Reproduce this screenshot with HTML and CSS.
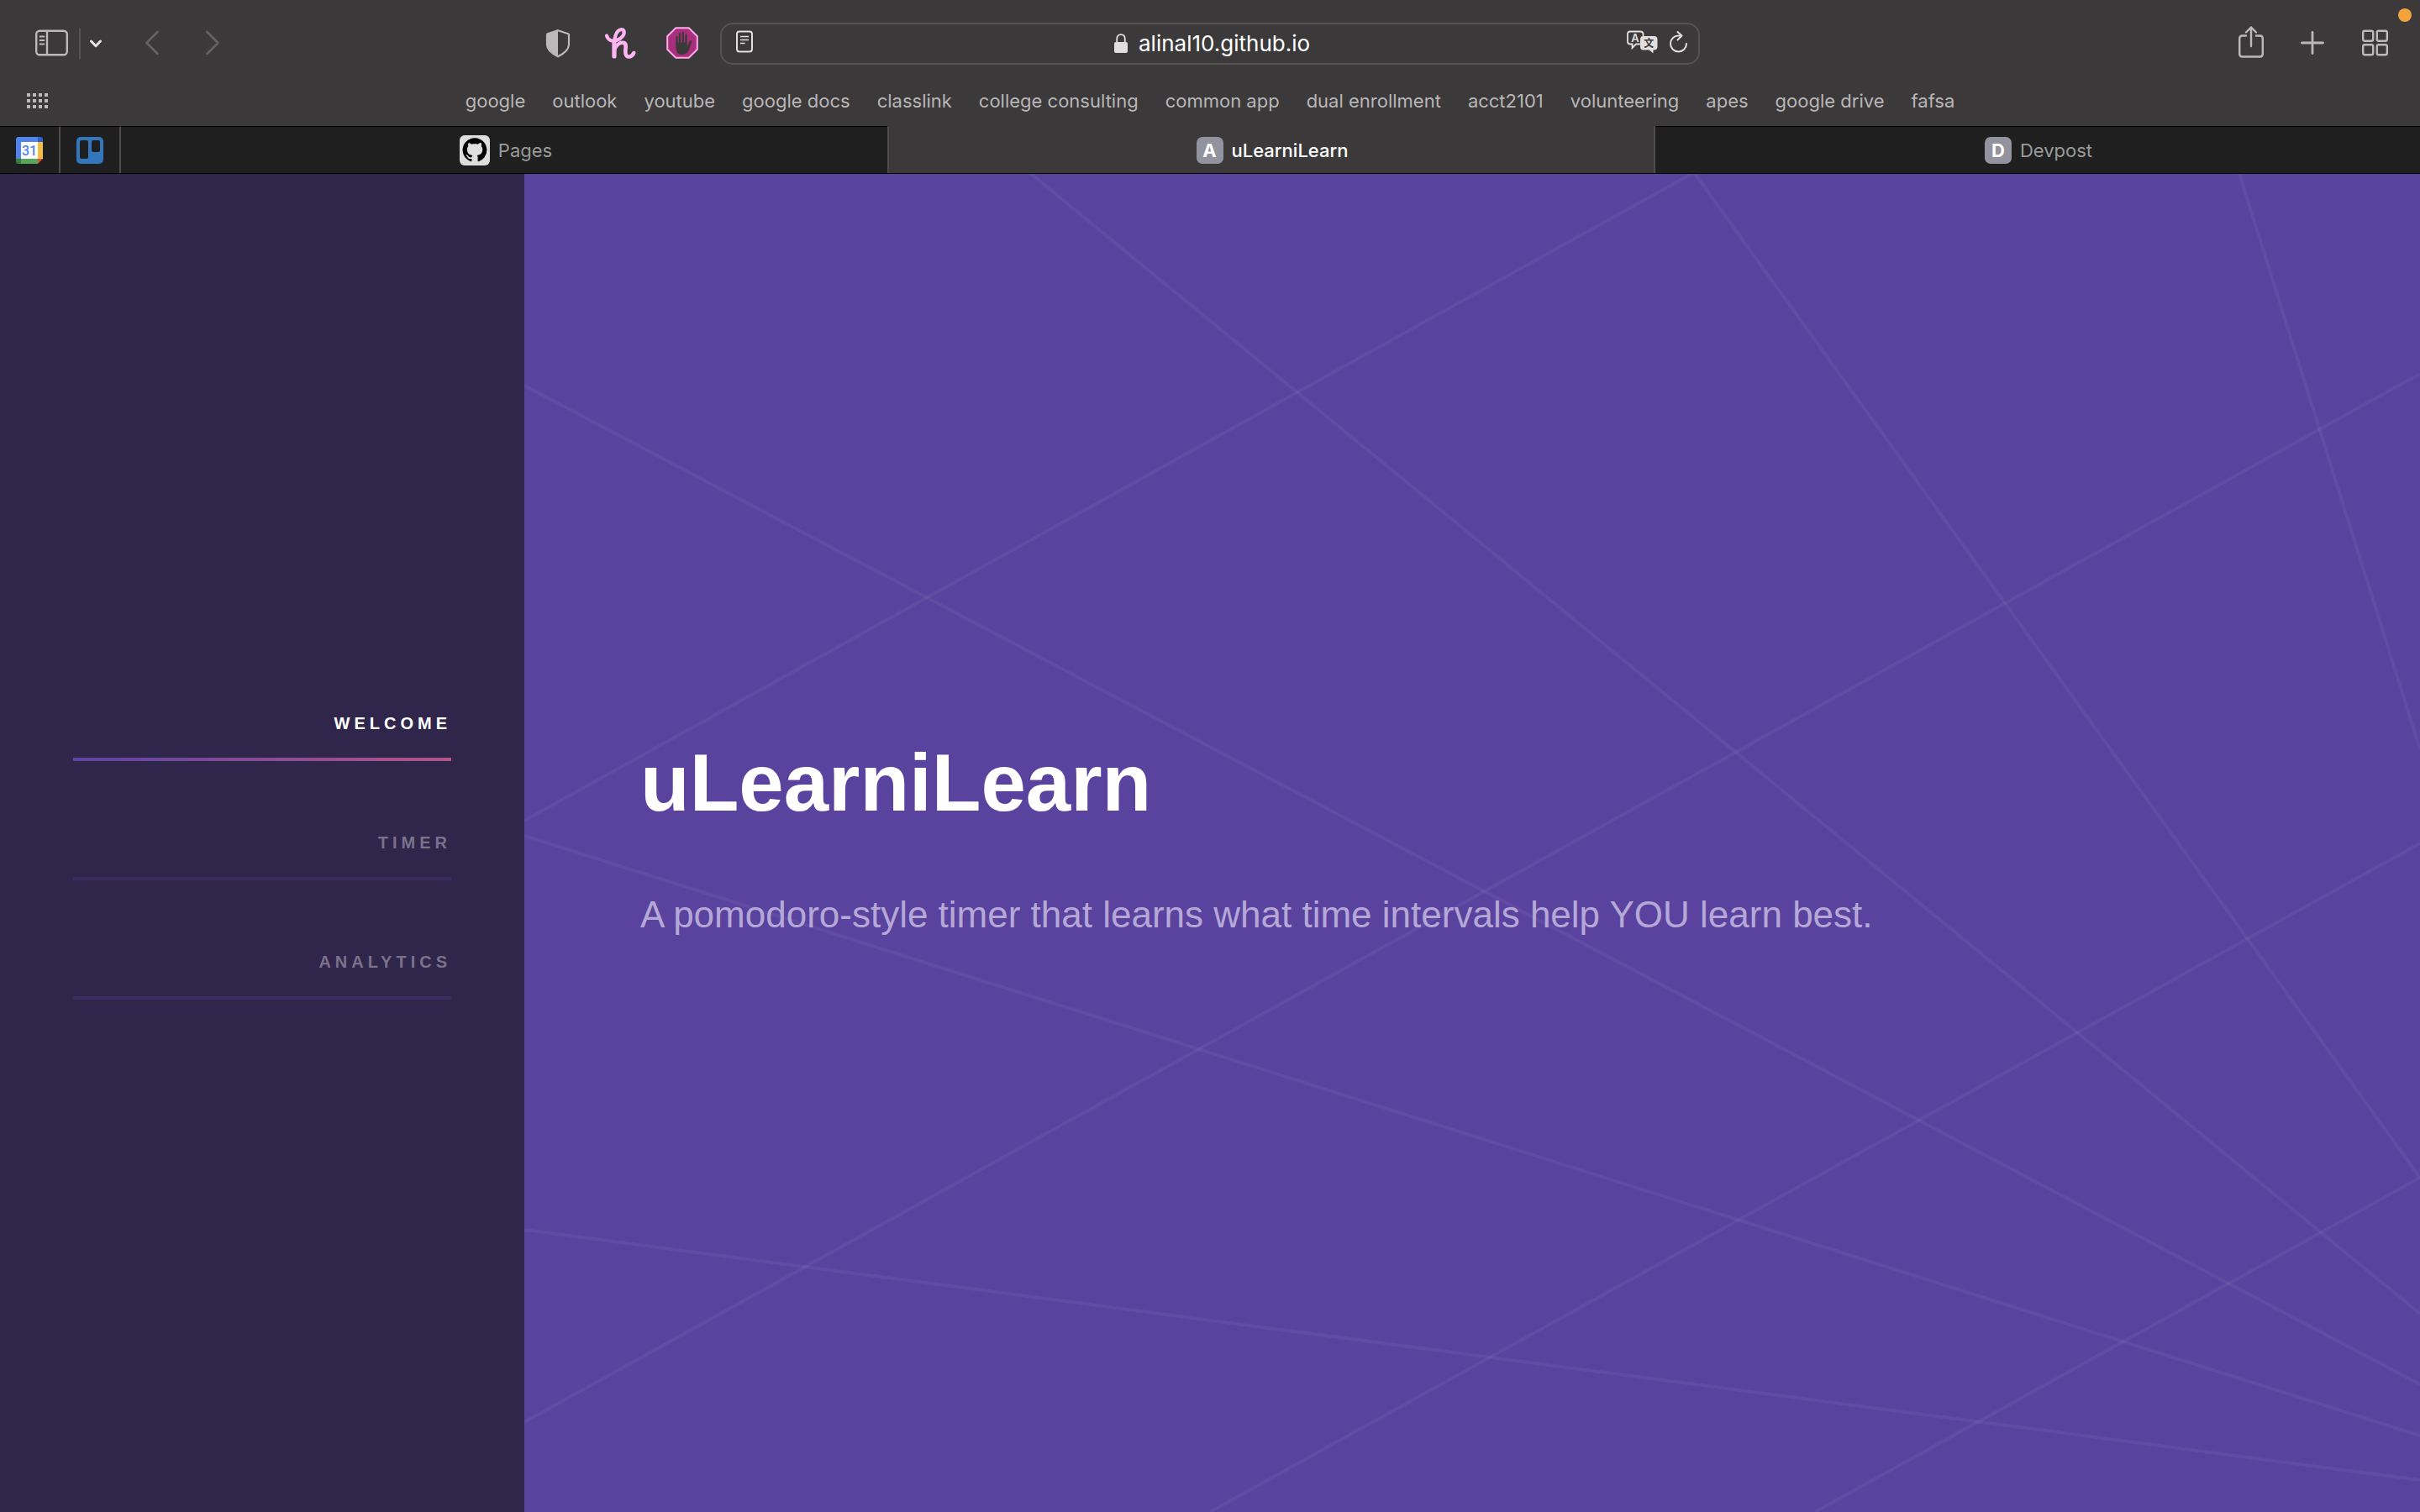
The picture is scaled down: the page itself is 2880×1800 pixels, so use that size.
FILE: index.html
```html
<!DOCTYPE html>
<html lang="en">
<head>
<meta charset="utf-8">
<title>uLearniLearn</title>
<link rel="stylesheet" href="styles.css">
</head>
<body>
<header class="browser">
  <div class="toolbar">
    <div class="toolbar-left">
      <button class="tool" aria-label="Show sidebar"><svg width="40" height="40" viewBox="0 0 40 40" fill="none" stroke="#bbb9ba" stroke-width="2.4"><rect x="1.2" y="5.7" width="36.6" height="28.6" rx="4"/><path d="M14 6v28"/><path d="M5.5 12.5h5M5.5 17h5M5.5 21.500h5" stroke-width="1.8" stroke-linecap="round"/></svg></button>
      <span class="tool-divider"></span>
      <button class="tool tool-narrow" aria-label="Tab groups"><svg width="28" height="40" viewBox="0 0 28 40" fill="none" stroke="#e6e4e5" stroke-width="3" stroke-linecap="round" stroke-linejoin="round"><path d="M8.500 18l5.500 5.700 5.500-5.700"/></svg></button>
      <button class="tool tool-back" aria-label="Back"><svg width="40" height="40" viewBox="0 0 40 40" fill="none" stroke="#636162" stroke-width="2.800" stroke-linecap="round" stroke-linejoin="round"><path d="M26.500 7L13.500 20l13 13"/></svg></button>
      <button class="tool tool-forward" aria-label="Forward"><svg width="40" height="40" viewBox="0 0 40 40" fill="none" stroke="#636162" stroke-width="2.800" stroke-linecap="round" stroke-linejoin="round"><path d="M13.500 7l13 13-13 13"/></svg></button>
      <div class="extensions">
        <button class="tool" aria-label="Privacy report"><svg width="40" height="40" viewBox="0 0 40 40"><path d="M21 5.200L33.300 9.300q.7.300.7 1V22q0 8-13 14.200Q8 30 8 22V10.300q0-.700.700-1z" fill="none" stroke="#bbb9ba" stroke-width="2.200"/><path d="M21 4.500L8 9V22q0 8 13 14.500z" fill="#bbb9ba"/></svg></button>
        <button class="tool" aria-label="Honey"><svg width="40" height="40" viewBox="0 0 40 40" fill="none" stroke="#ffb4f4" stroke-linecap="round" stroke-linejoin="round"><path d="M5 11.500c1.500 5 6 7.500 12 5.500 6-2 9.500-7 8.500-11-.7-2.500-4.500-2.700-7 0-3.500 3.500-4.200 9-4.500 15V36" stroke-width="4.200"/><path d="M14 20v16" stroke-width="5.200"/><path d="M14.500 27c3-6 7.500-8 11-7 5 1.800-.5 11.500 3 15.300 2.500 2.400 7 1.200 8.700-3.300" stroke-width="4.600"/></svg></button>
        <button class="tool" aria-label="Ad blocker"><svg width="40" height="40" viewBox="0 0 40 40"><path d="M13.200 2.200h15.600l10 10v15.600l-10 10H13.200l-10-10V12.200z" fill="#a72f7b" stroke="#ffa9ea" stroke-width="2"/><g fill="none" stroke="#3c393a" stroke-width="2.300" stroke-linecap="round"><path d="M14.500 21v-8M18 19V9.500M21.800 19v-11M25.500 20V10.500"/></g><path d="M13.300 19.500h13.500v4.500l3-6q2-2 2.600-.2L29.500 27q-2 7-9 7-7.200 0-7.200-10z" fill="#3c393a"/></svg></button>
      </div>
    </div>
    <div class="address">
      <button class="mini mini-reader" aria-label="Reader view"><svg width="22" height="28" viewBox="0 0 22 28" fill="none" stroke="#e0dedf" stroke-width="2"><rect x="2" y="1.500" width="18" height="24" rx="3"/><path d="M6 7.500h10M6 11.500h10M6 15.500h5.500" stroke-width="1.600"/></svg></button>
      <label class="address-center"><svg width="18" height="26" viewBox="0 0 18 26"><rect x="1" y="11" width="16" height="13" rx="2" fill="#e0dedf"/><path d="M4.200 12V7.500Q4.200 2.200 9 2.200t4.800 5.300V12" fill="none" stroke="#e0dedf" stroke-width="1.800"/></svg><input class="address-input" type="text" value="alinal10.github.io" aria-label="Address"></label>
      <div class="address-right">
        <button class="mini" aria-label="Translate"><svg width="38" height="28" viewBox="0 0 38 28"><path d="M17 16.500h-5L7.500 21v-4.500H5Q2 16.500 2 13.500V4.500Q2 1.500 5 1.500h12Q20.500 1.500 20.500 4.500V7" fill="none" stroke="#e0dedf" stroke-width="1.800"/><path d="M20.500 7h13q4 0 4 4v8.500q0 4-4 4h-1V27.500L27.500 23.500h-7q-3.500 0-3.500-4V11q0-4 3.500-4z" fill="#e0dedf"/><text x="11" y="14" class="glyph-a" text-anchor="middle">A</text><text x="27.200" y="20" class="glyph-b" text-anchor="middle">文</text></svg></button>
        <button class="mini" aria-label="Reload"><svg width="24" height="28" viewBox="0 0 24 28" fill="none" stroke="#e0dedf" stroke-width="2" stroke-linecap="round" stroke-linejoin="round"><path d="M15.500 6.500H12.500A9.500 9.500 0 1 0 22 16"/><path d="M11.500 2l5 4.500-5 5"/></svg></button>
      </div>
    </div>
    <div class="toolbar-right">
      <button class="tool" aria-label="Share"><svg width="40" height="40" viewBox="0 0 40 40" fill="none" stroke="#bbb9ba" stroke-width="2.400" stroke-linecap="round" stroke-linejoin="round"><path d="M14 11.500H9.500Q6.200 11.500 6.200 15V33Q6.200 36.500 9.500 36.500h21Q33.800 36.500 33.800 33V15Q33.800 11.500 30.500 11.500H26M20 24V1.500M14 7.500l6-6 6 6"/></svg></button>
      <button class="tool" aria-label="New tab"><svg width="40" height="40" viewBox="0 0 40 40" fill="none" stroke="#bbb9ba" stroke-width="2.800" stroke-linecap="round"><path d="M19 7.500v25M6.500 20h25"/></svg></button>
      <button class="tool" aria-label="Tab overview"><svg width="40" height="40" viewBox="0 0 40 40" fill="none" stroke="#bbb9ba" stroke-width="2.400"><rect x="5.200" y="5.700" width="12" height="12" rx="2"/><rect x="21.800" y="5.700" width="12" height="12" rx="2"/><rect x="5.200" y="22.300" width="12" height="12" rx="2"/><rect x="21.800" y="22.300" width="12" height="12" rx="2"/></svg></button>
    </div>
    <span class="recording-dot"></span>
  </div>
  <div class="favorites">
    <button class="mini favorites-grid" aria-label="Favorites"><svg width="26" height="20" viewBox="0 0 26 20" fill="#bbb9ba"><path d="M0 1h4v4H0zM7 1h4v4H7zM14 1h4v4h-4zM21 1h4v4h-4zM0 8h4v4H0zM7 8h4v4H7zM14 8h4v4h-4zM21 8h4v4h-4zM0 15h4v4H0zM7 15h4v4H7zM14 15h4v4h-4zM21 15h4v4h-4z"/></svg></button>
    <nav class="bookmarks" aria-label="Bookmarks">
      <a href="#">google</a><a href="#">outlook</a><a href="#">youtube</a><a href="#">google docs</a><a href="#">classlink</a><a href="#">college consulting</a><a href="#">common app</a><a href="#">dual enrollment</a><a href="#">acct2101</a><a href="#">volunteering</a><a href="#">apes</a><a href="#">google drive</a><a href="#">fafsa</a>
    </nav>
  </div>
  <nav class="tabs" aria-label="Tabs">
    <a class="tab tab-pinned" href="#" aria-label="Calendar"><svg width="32" height="32" viewBox="0 0 32 32"><path d="M3 0h23v6H6v20H0V3Q0 0 3 0z" fill="#4f83ee"/><path d="M26 0h3q3 0 3 3v3h-6z" fill="#2c60cf"/><path d="M26 6h6v20h-6z" fill="#f2bd42"/><path d="M6 26h20v6H6z" fill="#58a55c"/><path d="M0 26h6v6H3q-3 0-3-3z" fill="#3a7d3f"/><path d="M26 26h6l-6 6z" fill="#d8503f"/><path d="M6 6h20v20H6z" fill="#fff"/><text x="16" y="22" class="calendar-day" text-anchor="middle">31</text></svg></a>
    <a class="tab tab-pinned" href="#" aria-label="Boards"><svg width="32" height="32" viewBox="0 0 32 32"><rect width="32" height="32" rx="5" fill="#3277bc"/><rect x="4" y="4" width="10" height="22" rx="2" fill="#1f1f1f"/><rect x="18" y="4" width="10" height="14" rx="2" fill="#1f1f1f"/></svg></a>
    <a class="tab tab-titled" href="#"><svg width="36" height="36" viewBox="0 0 36 36"><rect width="36" height="36" rx="6" fill="#dedede"/><g transform="translate(3.600 3.200) scale(1.800)"><path d="M8 0C3.580 0 0 3.580 0 8c0 3.540 2.290 6.530 5.470 7.590.4.070.55-.17.55-.38 0-.19-.01-.82-.01-1.490-2.010.37-2.530-.49-2.690-.94-.09-.23-.48-.94-.82-1.130-.28-.15-.68-.52-.01-.53.63-.01 1.080.58 1.230.82.72 1.210 1.870.87 2.330.66.07-.52.28-.87.51-1.070-1.780-.2-3.640-.89-3.640-3.950 0-.87.31-1.590.82-2.150-.08-.2-.36-1.020.08-2.120 0 0 .67-.21 2.200.82.64-.18 1.320-.27 2-.27.68 0 1.360.09 2 .27 1.530-1.040 2.200-.82 2.200-.82.44 1.100.16 1.920.08 2.120.51.56.82 1.270.82 2.150 0 3.070-1.870 3.750-3.650 3.950.29.25.54.73.54 1.480 0 1.070-.01 1.930-.01 2.200 0 .21.15.46.55.38A8.013 8.013 0 0 0 16 8c0-4.420-3.580-8-8-8z"/></g></svg>Pages</a>
    <a class="tab tab-titled tab-active" href="#" aria-current="page"><span class="favicon">A</span>uLearniLearn</a>
    <a class="tab tab-titled" href="#"><span class="favicon">D</span>Devpost</a>
  </nav>
</header>
<div class="page">
  <aside class="sidebar">
    <nav class="menu" aria-label="Sections">
      <a class="menu-link menu-link-active" href="#intro">Welcome</a>
      <a class="menu-link" href="#timer">Timer</a>
      <a class="menu-link" href="#analytics">Analytics</a>
    </nav>
  </aside>
  <main class="intro" id="intro">
    <svg class="intro-lines" viewBox="0 0 2256 1593" preserveAspectRatio="none" aria-hidden="true">
      <path d="M0 252L2256 1441"/><path d="M603 0L2256 1357"/><path d="M1393 0L2256 1195"/><path d="M2041 0L2256 685"/><path d="M0 788L2256 1502"/><path d="M0 1257L2256 1555"/><path d="M0 770L1389 0"/><path d="M0 1486L2256 238"/><path d="M816 1593L2256 797"/><path d="M1536 1593L2256 1195"/>
    </svg>
    <div class="intro-inner">
      <h1>uLearniLearn</h1>
      <p>A pomodoro-style timer that learns what time intervals help YOU learn best.</p>
    </div>
  </main>
</div>
</body>
</html>
```
FILE: styles.css
```css
* { box-sizing: border-box; }
body {
  margin: 0;
  min-height: 100vh;
  display: flex;
  flex-direction: column;
  font-family: "Liberation Sans", Arial, sans-serif;
}
a { color: inherit; text-decoration: none; }
button { margin: 0; padding: 0; border: 0; background: none; display: flex; }
svg { display: block; flex: none; }

/* Browser chrome */
.browser {
  background: #3c393a;
  color: #b8b6b7;
  font-family: Inter, "Noto Sans CJK SC", sans-serif;
  font-size: 22px;
}
.toolbar {
  position: relative;
  height: 104px;
  display: grid;
  grid-template-columns: 1fr minmax(400px, 1166px) 1fr;
  align-items: center;
}
.tool { padding-bottom: 2px; }
.toolbar-left { display: flex; align-items: center; padding: 0 26px 0 42px; }
.tool-divider { width: 2px; height: 36px; margin: 0 4px 0 12px; background: #545253; }
.tool-back { margin-left: 33px; }
.tool-forward { margin-left: 32px; }
.extensions { display: flex; gap: 34px; margin-left: auto; }
.toolbar-right { display: flex; justify-content: flex-end; gap: 34px; padding-right: 33px; }
.recording-dot {
  position: absolute;
  top: 10px;
  right: 10px;
  width: 16px;
  height: 16px;
  border-radius: 50%;
  background: #f2a33c;
}
.address {
  height: 50px;
  border: 2px solid #545253;
  border-radius: 15px;
  display: grid;
  grid-template-columns: 1fr auto 1fr;
  align-items: center;
  padding: 0 12px 0 16px;
}
.address-center { display: flex; align-items: center; gap: 12px; padding-left: 4px; }
.address-input {
  width: 208px;
  padding: 0;
  border: 0;
  background: none;
  color: #fff;
  font: 26px/32px Inter, sans-serif;
}
.address-right { display: flex; justify-content: flex-end; gap: 12px; }
.mini { padding-bottom: 4px; }
.glyph-a { font: 600 13px Inter, sans-serif; fill: #e0dedf; }
.glyph-b { font: 700 12px "Noto Sans CJK SC", sans-serif; fill: #3c393a; }

.favorites {
  height: 46px;
  padding: 0 32px 14px;
  display: grid;
  grid-template-columns: 1fr auto 1fr;
  align-items: center;
}
.favorites-grid { padding: 0; }
.bookmarks { display: flex; gap: 32px; line-height: 32px; white-space: nowrap; }

.tabs { display: flex; height: 57px; border-bottom: 1px solid #000; line-height: 32px; }
.tab {
  flex: 1;
  display: flex;
  align-items: center;
  justify-content: center;
  gap: 10px;
  border-top: 1px solid #000;
  background: #1f1f1f;
  color: #9a9a9a;
}
.tab-titled { padding-left: 4px; }
.tab-pinned { flex: 0 0 72px; border-right: 2px solid #4d4b4c; }
.tab-active {
  background: #3c393a;
  border-top-color: #3c393a;
  box-shadow: inset 2px 0 #4d4b4c, 2px 0 #4d4b4c;
  z-index: 1;
  color: #fff;
  font-weight: 500;
}
.favicon {
  width: 32px;
  height: 32px;
  border-radius: 7px;
  background: #9393a0;
  color: #fff;
  font-weight: 700;
  text-align: center;
}
.calendar-day { font: 500 16px Roboto, sans-serif; fill: #4f83ee; }

/* Site */
.page { flex: 1; display: flex; }
.sidebar {
  flex: 0 0 624px;
  padding: 0 87px;
  background: #30254b;
  display: flex;
  flex-direction: column;
  justify-content: center;
}
.menu { display: flex; flex-direction: column; gap: 53px; }
.menu-link {
  padding: 29px 0 26px;
  border-bottom: 4px solid #3a2c5f;
  color: #7a718b;
  font-size: 20px;
  line-height: 30px;
  font-weight: 700;
  letter-spacing: 5px;
  text-align: right;
  text-transform: uppercase;
}
.menu-link-active {
  color: #fff;
  border-image: linear-gradient(to right, #5b439f, #b2558a) 1;
}
.intro {
  position: relative;
  flex: 1;
  background: #5a429f;
  display: flex;
  align-items: center;
}
.intro-lines {
  position: absolute;
  inset: 0;
  width: 100%;
  height: 100%;
  fill: none;
  stroke: rgba(255, 255, 255, 0.05);
  stroke-width: 4;
}
.intro-inner { position: relative; padding: 0 138px; }
h1 { margin: 0; color: #fff; font-size: 96px; line-height: 144px; }
p { margin: 46px 0 19px; color: #b5a8d6; font-size: 44px; line-height: 78px; }
```
